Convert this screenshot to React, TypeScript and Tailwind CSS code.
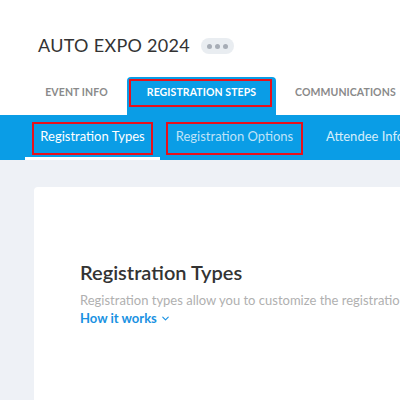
import { ChevronDown } from 'lucide-react'

const font = { fontFamily: 'Lato, "Open Sans", sans-serif' }

function RedBox({ className }: { className: string }) {
  return <span className={`pointer-events-none absolute border-2 border-[#e8101a] ${className}`} />
}

export default function App() {
  return (
    <div className="h-[400px] w-[400px] overflow-hidden bg-white" style={font}>
      {/* event title */}
      <div className="flex h-[77px] items-start gap-[11px] pl-[38px] pt-[32px]">
        <h1 className="text-[18px] leading-[26px] font-normal tracking-[0.3px] text-[#333]">AUTO EXPO 2024</h1>
        <button className="mt-[6px] flex h-[16px] w-[33px] shrink-0 items-center justify-center gap-[3px] rounded-full bg-[#e9edf1]">
          <span className="h-[5px] w-[5px] rounded-full bg-[#a7adb6]" />
          <span className="h-[5px] w-[5px] rounded-full bg-[#a7adb6]" />
          <span className="h-[5px] w-[5px] rounded-full bg-[#a7adb6]" />
        </button>
      </div>

      {/* main tabs */}
      <div className="flex h-[38px] pl-[26px] text-[10.5px] font-bold tracking-[0.1px] whitespace-nowrap">
        <div className="flex w-[101px] shrink-0 items-center justify-center pb-[6px] text-[#8a8a8a]">EVENT INFO</div>
        <div className="relative flex w-[149px] shrink-0 items-center justify-center rounded-t-[4px] bg-[#0a9de6] pb-[6px] text-white">
          REGISTRATION STEPS
          <RedBox className="left-[2px] right-[4px] top-[2px] bottom-[8px]" />
        </div>
        <div className="flex shrink-0 items-center pb-[6px] pl-[19px] text-[#8a8a8a]">COMMUNICATIONS</div>
      </div>

      {/* sub tabs */}
      <div className="flex h-[45px] bg-[#0a9de6] pl-[25px] text-[13px] whitespace-nowrap">
        <div className="relative flex w-[135px] shrink-0 items-center justify-center border-b-[3px] border-white pt-[2px] text-white">
          Registration Types
          <RedBox className="left-[7px] right-[7px] top-[7px] bottom-[2px]" />
        </div>
        <div className="relative flex w-[149px] shrink-0 items-center justify-center border-b-[3px] border-transparent pt-[2px] text-[#bfe3f8]">
          Registration Options
          <RedBox className="left-[6px] right-[6px] top-[7px] bottom-[2px]" />
        </div>
        <div className="flex shrink-0 items-center border-b-[3px] border-transparent pl-[17px] pt-[2px] text-[#d5eefb]">
          Attendee Info
        </div>
      </div>

      {/* content */}
      <div className="h-[240px] bg-[#eef1f6] pl-[34px] pt-[27px]">
        <div className="h-[300px] rounded-tl-[4px] bg-white pl-[46px] pt-[72px]">
          <h2 className="text-[20px] leading-[26px] font-semibold text-[#333]">Registration Types</h2>
          <p className="mt-[6px] whitespace-nowrap text-[13px] leading-[18px] text-[#b0b0b0]">
            Registration types allow you to customize the registration experience
          </p>
          <a className="flex items-center gap-[3px] text-[13px] leading-[18px] font-bold text-[#1a92e2]">
            How it works
            <ChevronDown className="mt-[1px] h-[11px] w-[11px]" strokeWidth={2.5} />
          </a>
        </div>
      </div>
    </div>
  )
}
